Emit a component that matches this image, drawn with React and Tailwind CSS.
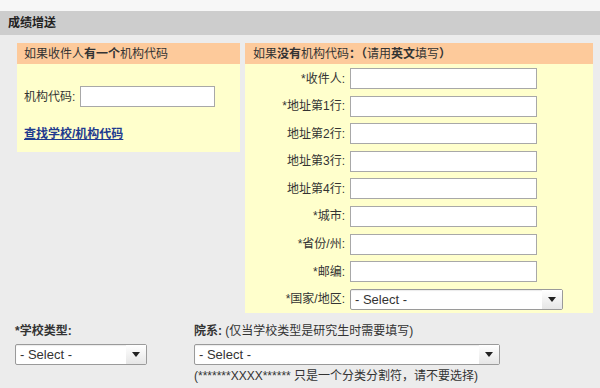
import React from 'react';

const rows = [
  '*收件人',
  '*地址第1行',
  '地址第2行',
  '地址第3行',
  '地址第4行',
  '*城市',
  '*省份/州',
  '*邮编',
];

function Select({ className }) {
  return (
    <div className={`flex items-center justify-between bg-white border border-[#9a9a9a] rounded-[2px] shadow-[inset_0_1px_1px_rgba(0,0,0,0.08)] ${className}`}>
      <span className="pl-[4px] text-[13px] text-[#333]">- Select -</span>
      <span className="w-[20px] h-full flex items-center justify-center bg-gradient-to-b from-white to-[#e6e6e6]">
        <svg width="8" height="5" viewBox="0 0 8 5">
          <path d="M0 0h8L4 5z" fill="#222" />
        </svg>
      </span>
    </div>
  );
}

export default function App() {
  return (
    <div className="w-[600px] h-[388px] overflow-hidden bg-[#ececec] text-[12px] text-[#333]" style={{ fontFamily: '"Liberation Sans", "Noto Sans CJK SC", sans-serif' }}>
      {/* top strip */}
      <div className="h-[11px] bg-[#f7f7f7]" />
      <div className="h-[24px] bg-[#cdcdcd] flex items-center pl-[8px] font-bold text-[12px] text-[#222]">
        成绩增送
      </div>

      {/* two panels */}
      <div className="flex items-start gap-[5px] pl-[17px] pt-[8px]">
        <div className="w-[223px] bg-[#ffffcc]">
          <div className="h-[21px] bg-[#fdca9b] flex items-center pl-[7px]">
            如果收件人<b>有一个</b>机构代码
          </div>
          <div className="pt-[22px] pl-[7px] pb-[9px]">
            <div className="flex items-center">
              <span className="w-[56px]">机构代码:</span>
              <div className="w-[135px] h-[21px] bg-white border border-[#a8a8a8]" />
            </div>
            <a href="#" className="block mt-[18px] text-[#1f3b8f] underline font-bold">查找学校/机构代码</a>
          </div>
        </div>

        <div className="w-[348px] bg-[#ffffcc]">
          <div className="h-[21px] bg-[#fdca9b] flex items-center pl-[8px]">
            如果<b>没有</b>机构代码<b>：（</b>请用<b>英文</b>填写<b> ）</b>
          </div>
          <div className="pt-[4px] pb-[3px] flex flex-col gap-[6.6px]">
            {rows.map((r) => (
              <div key={r} className="flex items-center">
                <span className="w-[102px] text-right pr-[2px]">{r}:</span>
                <div className="ml-[3px] w-[187px] h-[21px] bg-white border border-[#a8a8a8]" />
              </div>
            ))}
            <div className="flex items-center">
              <span className="w-[102px] text-right pr-[2px]">*国家/地区:</span>
              <Select className="ml-[3px] w-[213px] h-[21px]" />
            </div>
          </div>
        </div>
      </div>

      {/* bottom section */}
      <div className="flex pt-[10px]">
        <div className="pl-[15px] w-[194px]">
          <div className="font-bold h-[16px] leading-[16px]">*学校类型:</div>
          <Select className="mt-[5px] w-[132px] h-[21px]" />
        </div>
        <div>
          <div className="h-[16px] leading-[16px]">
            <b>院系:</b> (仅当学校类型是研究生时需要填写)
          </div>
          <Select className="mt-[5px] w-[306px] h-[21px]" />
          <div className="mt-[4px] leading-[14px]">(*******XXXX****** 只是一个分类分割符，请不要选择)</div>
        </div>
      </div>
    </div>
  );
}
